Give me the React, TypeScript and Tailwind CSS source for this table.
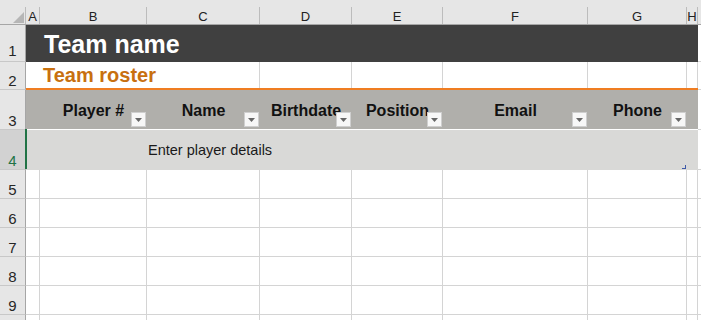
import React from "react";

const cols = [
  { l: "A", w: "w-[14px]" },
  { l: "B", w: "w-[107px]" },
  { l: "C", w: "w-[113px]" },
  { l: "D", w: "w-[92px]" },
  { l: "E", w: "w-[91px]" },
  { l: "F", w: "w-[145px]" },
  { l: "G", w: "w-[99px]" },
  { l: "H", w: "w-[11px]" },
];

const headers = [
  { t: "Player #", w: "w-[107px]" },
  { t: "Name", w: "w-[113px]" },
  { t: "Birthdate", w: "w-[92px]" },
  { t: "Position", w: "w-[91px]" },
  { t: "Email", w: "w-[145px]" },
  { t: "Phone", w: "w-[99px]" },
];

function RH({ n, pb = "pb-px", sel = false }: { n?: number; pb?: string; sel?: boolean }) {
  return (
    <div
      className={`w-[26px] shrink-0 flex items-end justify-center border-r border-b border-r-[#a6a6a6] border-b-[#c8c8c8] text-[15px] leading-[15px] ${pb} ${
        sel ? "bg-[#d2d2d2] text-[#217346]" : "bg-[#e6e6e6] text-[#262626]"
      }`}
    >
      {n}
    </div>
  );
}

function Dropdown() {
  return (
    <div className="absolute right-px bottom-[2px] w-[15px] h-[15px] bg-[#f7f7f7] border border-[#cfcfcf] flex items-center justify-center">
      <svg width="7" height="4" className="mt-px">
        <polygon points="0,0 7,0 3.5,4" fill="#666666" />
      </svg>
    </div>
  );
}

export default function App() {
  return (
    <div className="w-[701px] h-[320px] overflow-hidden bg-white font-['Liberation_Sans',Arial,sans-serif] select-none">
      {/* column header */}
      <div className="flex h-[25px] bg-[#e6e6e6] border-b border-[#a6a6a6]">
        <div className="w-[26px] shrink-0 flex">
          <div className="flex-1 flex items-end justify-end pb-px pr-px">
            <svg width="11" height="11">
              <polygon points="11,0 11,11 0,11" fill="#b6b6b6" />
            </svg>
          </div>
          <div className="w-px h-[17px] self-end bg-[#bcbcbc]" />
        </div>
        {cols.map((c) => (
          <div key={c.l} className={`${c.w} shrink-0 flex`}>
            <div className="flex-1 flex justify-center pt-[9px] text-[13px] leading-[15px] text-[#222]">{c.l}</div>
            <div className="w-px h-[17px] self-end bg-[#bcbcbc]" />
          </div>
        ))}
        <div className="flex-1" />
      </div>

      {/* row 1 */}
      <div className="flex h-[37px]">
        <RH n={1} pb="pb-[3px]" />
        <div className="w-[672px] shrink-0 bg-[#404040] pl-[18px] pt-[5px] text-white font-bold text-[25px] leading-[28px] whitespace-nowrap">
          Team name
        </div>
        <div className="flex-1 border-b border-[#d4d4d4]" />
      </div>

      {/* row 2 */}
      <div className="flex h-[28px]">
        <RH n={2} />
        <div className="w-[672px] shrink-0 flex border-b-2 border-b-[#ef7d22]">
          <div className="w-[234px] shrink-0 border-r border-[#d4d4d4] pl-[17px] pt-[2px] text-[#c8700f] font-bold text-[20px] leading-[22px] whitespace-nowrap">
            Team roster
          </div>
          <div className="w-[92px] shrink-0 border-r border-[#d4d4d4]" />
          <div className="w-[91px] shrink-0 border-r border-[#d4d4d4]" />
          <div className="w-[145px] shrink-0 border-r border-[#d4d4d4]" />
          <div className="w-[99px] shrink-0 border-r border-[#d4d4d4]" />
          <div className="w-[11px] shrink-0 border-r border-[#d4d4d4]" />
        </div>
        <div className="flex-1 border-b border-[#d4d4d4]" />
      </div>

      {/* row 3 */}
      <div className="flex h-[40px]">
        <RH n={3} />
        <div className="w-[672px] shrink-0 flex bg-[#b0afab] border-b border-white">
          <div className="w-[14px] shrink-0" />
          {headers.map((h) => (
            <div key={h.t} className={`${h.w} shrink-0 relative flex justify-center pt-[12px]`}>
              <span className="font-bold text-[16px] leading-[18px] text-[#111] whitespace-nowrap">{h.t}</span>
              <Dropdown />
            </div>
          ))}
          <div className="w-[11px] shrink-0" />
        </div>
        <div className="flex-1 border-b border-[#d4d4d4]" />
      </div>

      {/* row 4 */}
      <div className="relative flex h-[40px]">
        <RH n={4} sel />
        <div className="relative w-[672px] shrink-0 bg-[#d9d9d7] pl-[122px] pt-[12px] text-[14.5px] leading-[17px] text-[#1a1a1a] whitespace-nowrap">
          Enter player details
          <span className="absolute right-[12px] bottom-px flex">
            <svg width="4" height="4">
              <path d="M3 0 H4 V4 H0 V3 H3 Z" fill="#3e59a8" />
            </svg>
          </span>
        </div>
        <div className="flex-1 border-b border-[#d4d4d4]" />
        <div className="absolute left-[25px] top-[-1px] bottom-px w-[2px] bg-[#217346]" />
      </div>

      {/* rows 5-9 */}
      {[5, 6, 7, 8, 9].map((n) => (
        <div key={n} className="flex h-[29px]">
          <RH n={n} />
          {cols.map((c) => (
            <div key={c.l} className={`${c.w} shrink-0 border-r border-b border-[#d4d4d4]`} />
          ))}
          <div className="flex-1 border-b border-[#d4d4d4]" />
        </div>
      ))}

      {/* row 10 (top edge only visible) */}
      <div className="flex h-[5px]">
        <div className="w-[26px] shrink-0 bg-[#e6e6e6] border-r border-[#a6a6a6]" />
        {cols.map((c) => (
          <div key={c.l} className={`${c.w} shrink-0 border-r border-[#d4d4d4]`} />
        ))}
        <div className="flex-1" />
      </div>
    </div>
  );
}
